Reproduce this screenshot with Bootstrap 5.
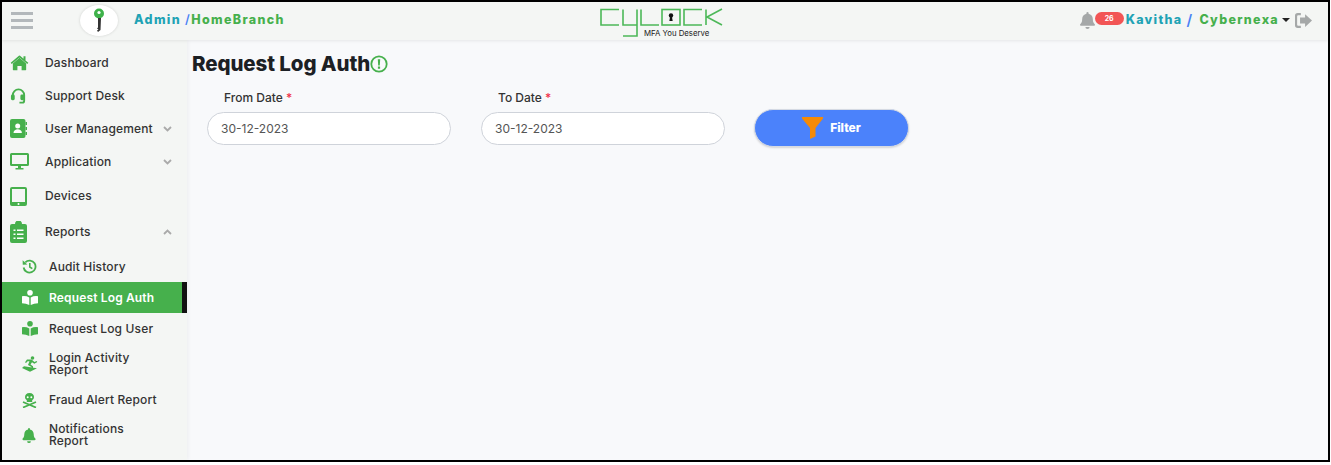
<!DOCTYPE html>
<html lang="en"><head><meta charset="utf-8"><title>Request Log Auth</title>
<link href="https://cdn.jsdelivr.net/npm/bootstrap@5.3.0/dist/css/bootstrap.min.css" rel="stylesheet">
<style>
html,body{height:100%;margin:0;overflow:hidden}
body{font-family:Inter,"Liberation Sans",sans-serif;background:#fff}
.frame{height:462px;width:1330px;border:2px solid #000;background:#f8f9fb;display:flex;flex-direction:column;overflow:hidden}
.topbar{height:38px;flex:none;background:#f4f6f4;box-shadow:0 1px 3px rgba(0,0,0,.08);position:relative;z-index:2;padding:0 16px 0 9px}
.burger{width:22px;display:flex;flex-direction:column;gap:4px;margin-top:-2px}
.burger i{display:block;height:3px;background:#b3b8bb}
.keylogo{width:38px;height:31px;border-radius:50%;background:#fff;box-shadow:0 0 3px rgba(0,0,0,.15);margin-left:47px;margin-top:-1px}
.crumb{font-weight:800;font-size:12.5px;letter-spacing:1.35px;margin-left:16px;color:#46b04c;margin-top:-2px}
.tealtxt{color:#1fa3b5}.bluetxt{color:#4b82f5;font-weight:600}
.brandwrap{position:absolute;left:596px;top:4px}
.brandtag{position:absolute;left:46px;top:22px;font-size:7.8px;color:#222;white-space:nowrap;line-height:10px}
.userbar{margin-left:auto;font-weight:800;font-size:12.5px;letter-spacing:1.3px;color:#46b04c;margin-top:-2px}
.pill{background:#f25555;color:#fff;font-size:7px;font-weight:700;border-radius:10px;width:29px;height:13px;line-height:13px;text-align:center;letter-spacing:0;margin:-4px 2px 0 0}
.sepslash{font-size:15px;margin:0 6px 0 4px}
.caretdown{width:0;height:0;border:4px solid transparent;border-top-color:#222;border-bottom:0;margin:0 5px 0 3px}
.bodyrow{flex:1;min-height:0}
.sidebar{width:185px;flex:none;background:#f4f6f4;padding-top:6px;box-shadow:1px 0 4px rgba(0,0,0,.05);font-size:12px;color:#333}
.sitem{display:flex;align-items:center;color:#333;text-decoration:none;padding-left:8px;line-height:12px;font-weight:500;letter-spacing:.15px}
.sitem svg.ico{flex:none;fill:#46b04c}
.ticon{width:35px;display:flex}
.subicon{width:27px;margin-left:12px;display:flex}
.h33{height:33px}.h35{height:35px}.h31{height:31px}.h39{height:39px;padding-top:1px}.h34{height:34px}.h36{height:36px}
.subgap{height:2px}
.chev{margin-left:auto;margin-right:15px;flex:none}
.sitem.on{background:#46b04c;color:#fff;font-weight:600;border-right:5px solid #111;}
.sitem.on svg.ico{fill:#fff}
.pagewrap{padding:11px 0 0 5px;flex:1}
.pagehead{font-size:20.5px;font-weight:800;color:#1c2024;margin:0 0 14px;line-height:26px;letter-spacing:-.1px}
.fld{width:244px}
.fldgap{margin-left:30px}
.lbl{font-size:12px;font-weight:500;color:#333;margin:0 0 7px 17px;line-height:14px;display:block}
.req{color:#f0324a}
.dateinput.form-control{height:33px;border-radius:17px;border:1px solid #cfd3da;font-size:12px;color:#555;padding:0 13px;background:#fff;box-shadow:none;font-family:inherit}
.filterbtn.btn{width:155px;height:38px;border-radius:19px;background:#4b82fb;border:1px solid #d5dae3;color:#fff;font-weight:800;font-size:12px;margin:0 0 -2px 29px;padding:0;gap:7px;box-shadow:0 1px 2px rgba(0,0,0,.15)}
</style></head><body>
<div class="frame">
<header class="topbar d-flex align-items-center">
  <div class="burger" aria-label="menu"><i></i><i></i><i></i></div>
  <div class="keylogo d-flex align-items-center justify-content-center">
    <svg width="14" height="26" viewBox="0 0 14 26"><circle cx="7" cy="5.500" r="5" fill="#3fb24a"/><circle cx="7" cy="4.500" r="1.600" fill="#fff"/><path d="M6 10h3l-.5 12-2.500 2-1-1.500 1.500-1-1.500-1 1-1z" fill="#333"/></svg>
  </div>
  <div class="crumb"><span class="tealtxt">Admin</span> <span class="bluetxt">/</span>HomeBranch</div>
  <div class="brandwrap">
    <svg width="128" height="32" viewBox="0 0 128 32" fill="none" stroke="#4cb858" stroke-width="1.600">
      <path d="M21 3.500H3V19H21"/><path d="M25 3.500V19H39M39 3.500V30H25"/><path d="M43 3.500V19H61"/>
      <rect x="64" y="3.500" width="18" height="15.500"/><path d="M104 3.500H86V19H104"/>
      <path d="M108 3.500V19M124 3 109 11 124 19"/>
      <circle cx="73" cy="9.500" r="2.200" fill="#111" stroke="none"/><path d="M71.300 15l1-5h1.400l1 5z" fill="#111" stroke="none"/>
    </svg>
    <div class="brandtag">MFA You Deserve</div>
  </div>
  <div class="userbar d-flex align-items-center">
    <svg width="15" height="17" viewBox="0 0 448 512" fill="#a5a8a8"><path d="M224 512a64 64 0 0 0 64-64H160a64 64 0 0 0 64 64zm215-150c-19-21-55-52-55-154 0-78-54-140-128-155V32a32 32 0 1 0-64 0v21C118 68 64 130 64 208c0 102-36 133-55 154-6 6-9 14-9 22 0 16 13 32 32 32h384c19 0 32-16 32-32 0-8-3-16-9-22z"/></svg>
    <span class="pill">26</span>
    <span class="tealtxt">Kavitha</span><span class="bluetxt sepslash">/</span><span>Cybernexa</span>
    <span class="caretdown"></span>
    <svg width="17" height="15" viewBox="0 0 512 448" fill="#a5a8a8"><path d="M176 64H96a32 32 0 0 0-32 32v256a32 32 0 0 0 32 32h80v64H80a80 80 0 0 1-80-80V80A80 80 0 0 1 80 0h96z"/><path d="M512 224 304 32v104H152v176h152v104z"/></svg>
  </div>
</header>
<div class="bodyrow d-flex">
<nav class="sidebar">
  <a class="sitem h33" href="#"><span class="ticon"><svg class="ico" width="19" height="16" viewBox="0 0 576 512"><path d="M288 90 75 272v200c0 9 7 16 16 16h130V352h134v136h130c9 0 16-7 16-16V272z"/><path d="M570 246 480 172V40h-64v78L306 27a28 28 0 0 0-36 0L6 246l34 40L288 80l248 206z"/></svg></span>Dashboard</a>
  <a class="sitem h33" href="#"><span class="ticon"><svg class="ico" width="17" height="18" viewBox="0 0 18 18"><path fill="none" stroke="#46b04c" stroke-width="2" d="M3 9V8a6 6 0 0 1 12 0v6q0 2-2 2h-3"/><rect x="1" y="7.500" width="4" height="6" rx="1.500"/><rect x="11" y="7.500" width="4" height="6" rx="1.500"/></svg></span>Support Desk</a>
  <a class="sitem h33" href="#"><span class="ticon"><svg class="ico" width="17" height="19" viewBox="0 0 17 19"><rect x="0" y="0" width="15.500" height="19" rx="2"/><path d="M15.500 3h1.500v3h-1.500zM15.500 8h1.500v3h-1.500zM15.500 13h1.500v3h-1.500z"/><circle cx="7.700" cy="7" r="2.500" fill="#fff"/><path d="M3.500 14c0-5 8.400-5 8.400 0z" fill="#fff"/></svg></span>User Management<svg class="chev" width="9" height="6" viewBox="0 0 9 6"><path d="M1 1l3.500 3.500L8 1" fill="none" stroke="#aaa" stroke-width="1.800"/></svg></a>
  <a class="sitem h33" href="#"><span class="ticon"><svg class="ico" width="19" height="17" viewBox="0 0 19 17"><path fill-rule="evenodd" d="M1.500 0h16A1.500 1.500 0 0 1 19 1.500v10a1.500 1.500 0 0 1-1.500 1.500h-16A1.500 1.500 0 0 1 0 11.500v-10A1.500 1.500 0 0 1 1.500 0zM2 2v9h15V2z"/><path d="M8 13h3v2h2.500v1.500h-8V15H8z"/></svg></span>Application<svg class="chev" width="9" height="6" viewBox="0 0 9 6"><path d="M1 1l3.500 3.500L8 1" fill="none" stroke="#aaa" stroke-width="1.800"/></svg></a>
  <a class="sitem h36" href="#"><span class="ticon"><svg class="ico" width="17" height="19" viewBox="0 0 17 19"><path fill-rule="evenodd" d="M2 0h13a2 2 0 0 1 2 2v15a2 2 0 0 1-2 2H2a2 2 0 0 1-2-2V2a2 2 0 0 1 2-2zm0 2v13h13V2z"/><circle cx="8.500" cy="17" r="1" fill="#fff"/></svg></span>Devices</a>
  <a class="sitem h35" href="#"><span class="ticon"><svg class="ico" width="17" height="22" viewBox="0 0 17 22"><path d="M2 3h3a3.500 3.500 0 0 1 7 0h3a2 2 0 0 1 2 2v15a2 2 0 0 1-2 2H2a2 2 0 0 1-2-2V5a2 2 0 0 1 2-2z"/><path d="M3.500 8.500h2v1.600h-2zM7 8.500h6.500v1.600H7zM3.500 12.500h2v1.600h-2zM7 12.500h6.500v1.600H7zM3.500 16.500h2v1.600h-2zM7 16.500h6.500v1.600H7z" fill="#fff"/></svg></span>Reports<svg class="chev" width="9" height="6" viewBox="0 0 9 6"><path d="M1 5l3.500-3.500L8 5" fill="none" stroke="#aaa" stroke-width="1.800"/></svg></a>
  <div class="subgap"></div>
  <a class="sitem h31" href="#"><span class="subicon"><svg class="ico" width="15" height="15" viewBox="0 0 15 15"><path d="M3.300 3.300A6 6 0 1 1 1.600 8.500" fill="none" stroke="#46b04c" stroke-width="1.800"/><path d="M.6 1.200l.2 4.600 4.600-.2z"/><path d="M7.800 4v4l2.500 1.600" fill="none" stroke="#46b04c" stroke-width="1.600"/></svg></span>Audit History</a>
  <a class="sitem on h31" href="#"><span class="subicon"><svg class="ico" width="16" height="15" viewBox="0 0 16 15"><circle cx="8" cy="2.800" r="2.800"/><path d="M0 6.200q4-.6 7.300 1.300V15Q4 13.400 0 13.200zM16 6.200q-4-.6-7.300 1.300V15q3.300-1.600 7.300-1.800z"/></svg></span>Request Log Auth</a>
  <a class="sitem h31" href="#"><span class="subicon"><svg class="ico" width="16" height="15" viewBox="0 0 16 15"><circle cx="8" cy="2.800" r="2.800"/><path d="M0 6.200q4-.6 7.300 1.300V15Q4 13.400 0 13.200zM16 6.200q-4-.6-7.300 1.300V15q3.300-1.600 7.300-1.800z"/></svg></span>Request Log User</a>
  <a class="sitem h39" href="#"><span class="subicon"><svg class="ico" width="16" height="16" viewBox="0 0 16 16"><circle cx="10.500" cy="2" r="1.800"/><path d="M5 3.500h4.500l3 2.500 2-1 .8 1-3 1.800-2.300-1.500-1.500 2.200 2.500 1.700v2.800H9.500v-2L6 9 7.500 5.200H5.700L4 7 3 6.200z"/><path d="M0 12l2-1.800 13 2-7 3.500z"/></svg></span>Login Activity<br>Report</a>
  <a class="sitem h34" href="#"><span class="subicon"><svg class="ico" width="15" height="15" viewBox="0 0 15 15"><path d="M7.500 0C4.500 0 3 1.800 3 4c0 1.500.7 2.500 1.800 3.200V9h5.400V7.200C11.300 6.500 12 5.500 12 4c0-2.200-1.500-4-4.500-4z"/><circle cx="5.700" cy="4.200" r="1" fill="#fff"/><circle cx="9.300" cy="4.200" r="1" fill="#fff"/><path d="M1 9l13 5.500M14 9 1 14.500" stroke="#46b04c" stroke-width="1.800"/></svg></span>Fraud Alert Report</a>
  <a class="sitem h36" href="#"><span class="subicon"><svg class="ico" width="14" height="15" viewBox="0 0 448 512"><path d="M224 512a64 64 0 0 0 64-64H160a64 64 0 0 0 64 64zm215-150c-19-21-55-52-55-154 0-78-54-140-128-155V32a32 32 0 1 0-64 0v21C118 68 64 130 64 208c0 102-36 133-55 154-6 6-9 14-9 22 0 16 13 32 32 32h384c19 0 32-16 32-32 0-8-3-16-9-22z"/></svg></span>Notifications<br>Report</a>
</nav>
<main class="pagewrap">
  <h1 class="pagehead d-flex align-items-center">Request Log Auth<svg class="ms-0" width="18" height="18" viewBox="0 0 18 18"><circle cx="9" cy="9" r="7.700" fill="none" stroke="#46b04c" stroke-width="1.800"/><path d="M7.800 4.300h2.400l-.4 6.200H8.200zM7.900 11.600h2.200v2.200H7.900z" fill="#46b04c"/></svg></h1>
  <form class="d-flex align-items-end" style="padding-left:15px">
    <div class="fld"><label class="lbl">From Date <span class="req">*</span></label><input class="form-control dateinput" value="30-12-2023"></div>
    <div class="fld fldgap"><label class="lbl">To Date <span class="req">*</span></label><input class="form-control dateinput" value="30-12-2023"></div>
    <button type="button" class="btn filterbtn d-flex align-items-center justify-content-center">
      <svg width="21" height="22" viewBox="0 0 21 22"><path d="M0 0h21v1.500L13.500 11v8.500L8 22V11L0 1.500z" fill="#f58a07"/></svg>Filter</button>
  </form>
</main>
</div>
</div>
<script src="https://cdn.jsdelivr.net/npm/bootstrap@5.3.0/dist/js/bootstrap.bundle.min.js"></script>
</body></html>
